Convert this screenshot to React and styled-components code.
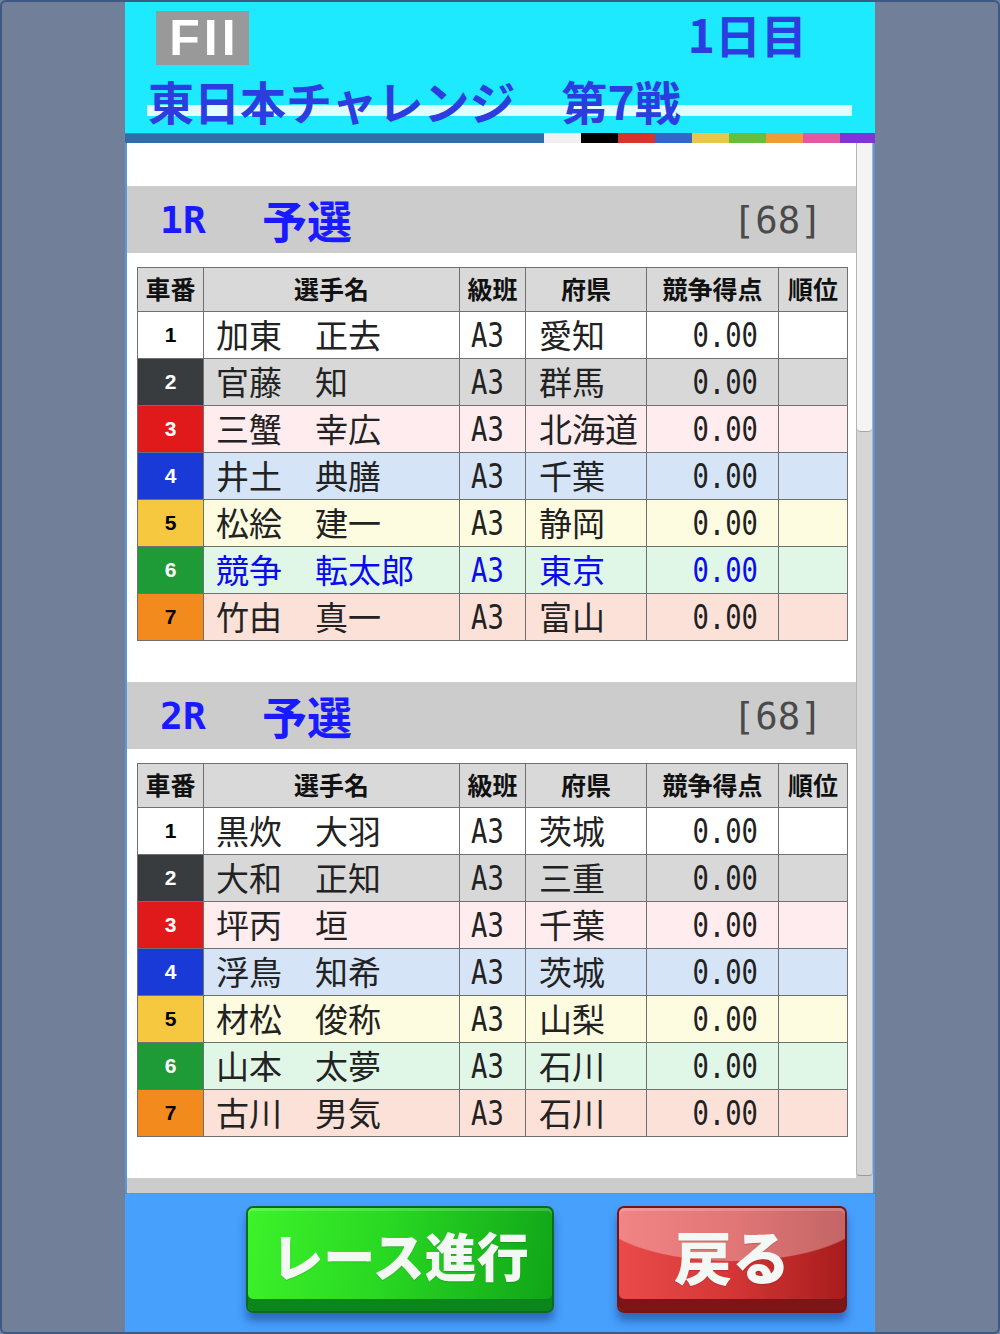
import React from "react";
import styled, { createGlobalStyle } from "styled-components";

const JP = '"Noto Sans CJK JP", "Noto Sans", sans-serif';
const MONO = '"DejaVu Sans Mono", "Liberation Mono", monospace';

const Global = createGlobalStyle`
  html, body { margin: 0; padding: 0; background: #717f99; }
  #root { width: 1000px; height: 1334px; }
  * { box-sizing: border-box; }
`;

const Page = styled.div`
  width: 1000px;
  height: 1334px;
  border: 2px solid #3d5a85;
  border-radius: 6px;
  background: #717f99;
  display: flex;
  justify-content: center;
  overflow: hidden;
`;

const Column = styled.div`
  width: 750px;
  height: 1330px;
  display: flex;
  flex-direction: column;
`;

const Header = styled.header`
  flex: 0 0 131px;
  background: #1de9ff;
  padding-top: 9px;
  display: flex;
  flex-direction: column;
`;

const TopRow = styled.div`
  display: flex;
  justify-content: space-between;
  align-items: flex-start;
  padding: 0 68px 0 31px;
`;

const Badge = styled.div`
  width: 93px;
  height: 54px;
  background: #999999;
  color: #ffffff;
  font-family: "Liberation Sans", Arial, sans-serif;
  font-weight: 700;
  font-size: 50px;
  letter-spacing: 4px;
  display: flex;
  align-items: center;
  justify-content: center;
  line-height: 1;
  padding-left: 4px;
`;

const DayLabel = styled.div`
  font-family: ${JP};
  font-weight: 700;
  font-size: 46px;
  line-height: 46px;
  color: #2b3ddf;
  margin-top: -1px;
`;

const TitleRow = styled.div`
  margin: 10px 0 0 22px;
  width: 705px;
  height: 50px;
  padding-left: 1px;
  font-family: ${JP};
  font-weight: 700;
  font-size: 46px;
  line-height: 50px;
  color: #2b3ddf;
  white-space: pre;
  background: linear-gradient(
    to bottom,
    transparent 30px,
    #e0fcff 30px,
    #e0fcff 41px,
    transparent 41px
  );
`;

const ColorBar = styled.div`
  flex: 0 0 10px;
  display: flex;
`;

const BarBase = styled.div`
  flex: 1;
  background: #2f6ea8;
  border-top: 1px solid #4a84bb;
`;

const Swatch = styled.div`
  flex: 0 0 ${(p) => p.$w || 37}px;
  background: ${(p) => p.$c};
`;

const Panel = styled.section`
  flex: 0 0 1051px;
  display: flex;
  background: #ffffff;
  border-left: 2px solid #5b97d8;
  border-right: 2px solid #5b97d8;
  border-bottom: 1px solid #8a8a8a;
  border-radius: 0 0 4px 4px;
  overflow: hidden;
`;

const List = styled.div`
  flex: 1;
  overflow: hidden;
  padding-top: 43px;
  background: #ffffff;
`;

const RaceBlock = styled.div`
  margin-bottom: 41px;
`;

const RaceBar = styled.div`
  height: 67px;
  background: #cccccc;
  display: flex;
  align-items: center;
  padding: 0 33px 0 33px;
`;

const RaceNo = styled.span`
  font-family: ${MONO};
  font-weight: 700;
  font-size: 38px;
  color: #1a1aff;
  width: 102px;
`;

const RaceKind = styled.span`
  font-family: ${JP};
  font-weight: 700;
  font-size: 45px;
  color: #1a1aff;
  flex: 1;
`;

const Entries = styled.span`
  font-family: ${MONO};
  font-size: 38px;
  color: #4a4a4a;
  display: inline-block;
  transform: scaleX(0.98);
  transform-origin: right center;
`;

const Table = styled.table`
  margin: 14px 9px 0 10px;
  width: 710px;
  border-collapse: collapse;
  table-layout: fixed;
  border: 1px solid #6a6a6a;
`;

const HeadCell = styled.th`
  height: 44px;
  padding: 0 0 2px;
  background: #d9d9d9;
  border: 1px solid #707070;
  font-family: ${JP};
  font-weight: 700;
  font-size: 25px;
  color: #111111;
  text-align: center;
  vertical-align: middle;
  line-height: 1;
`;

const Row = styled.tr`
  background: ${(p) => p.$bg};
  color: ${(p) => (p.$blue ? "#0b0bf0" : "#222222")};
`;

const NumCell = styled.td`
  height: 47px;
  padding: 0;
  border: 1px solid #707070;
  background: ${(p) => p.$bg};
  color: ${(p) => p.$fg};
  font-family: "Liberation Sans", Arial, sans-serif;
  font-weight: 700;
  font-size: 21px;
  text-align: center;
  vertical-align: middle;
`;

const NameCell = styled.td`
  padding: 0 0 2px ${(p) => p.$pl || 12}px;
  border: 1px solid #707070;
  font-family: ${JP};
  font-size: 33px;
  line-height: 1;
  white-space: pre;
  vertical-align: middle;
  text-align: left;
`;

const MonoCell = styled.td`
  padding: 0 ${(p) => p.$pr || 0}px 0 ${(p) => p.$pl || 0}px;
  border: 1px solid #707070;
  text-align: ${(p) => p.$align || "left"};
  vertical-align: middle;
  line-height: 1;
`;

const MonoText = styled.span`
  display: inline-block;
  font-family: ${MONO};
  font-size: 34px;
  transform: scaleX(0.8);
  transform-origin: ${(p) => p.$origin || "left"} center;
`;

const ScrollCol = styled.div`
  flex: 0 0 17px;
  display: flex;
  flex-direction: column;
  background: #cccccc;
`;

const Track = styled.div`
  flex: 1;
  background: #d6d6d6;
  border-left: 1px solid #b5b5b5;
  border-right: 1px solid #b5b5b5;
  border-bottom: 1px solid #9a9a9a;
  border-radius: 0 0 4px 4px;
  display: flex;
  flex-direction: column;
`;

const Thumb = styled.div`
  height: 289px;
  background: #f4f4f4;
  border-bottom: 1px solid #a8a8a8;
  border-radius: 0 0 4px 4px;
`;

const Filler = styled.div`
  flex: 0 0 17px;
  background: #cccccc;
`;

const Footer = styled.footer`
  flex: 1;
  background: #47a0fc;
  display: flex;
  justify-content: flex-end;
  align-items: flex-start;
  gap: 63px;
  padding: 12px 28px 0 0;
`;

const Btn = styled.button`
  width: ${(p) => p.$w}px;
  height: 107px;
  border-radius: 7px;
  border: 2px solid ${(p) => p.$edge};
  background: ${(p) => p.$bg};
  box-shadow: inset 0 -12px 0 ${(p) => p.$strip},
    inset 0 3px 0 rgba(255, 255, 255, 0.18),
    0 8px 8px rgba(10, 40, 110, 0.45);
  color: #f4f8f4;
  font-family: ${JP};
  font-weight: 900;
  font-size: ${(p) => p.$fs}px;
  line-height: 1;
  padding: 0 0 10px;
  display: flex;
  align-items: center;
  justify-content: center;
  cursor: pointer;
  text-shadow: 0 1px 1px rgba(0, 0, 0, 0.15);
`;

const colors = [
  { num: "#ffffff", fg: "#000000", row: "#ffffff" },
  { num: "#383c3f", fg: "#ffffff", row: "#d8d8d8" },
  { num: "#e01a1a", fg: "#ffffff", row: "#ffecee" },
  { num: "#1a3ad8", fg: "#ffffff", row: "#d5e5f7" },
  { num: "#f5c840", fg: "#000000", row: "#fefce0" },
  { num: "#1e9a36", fg: "#ffffff", row: "#e0f6e6" },
  { num: "#f38a1e", fg: "#000000", row: "#fbe1d8" },
];

const races = [
  {
    no: "1R",
    kind: "予選",
    entries: "[68]",
    riders: [
      ["加東　正去", "愛知"],
      ["官藤　知", "群馬"],
      ["三蟹　幸広", "北海道"],
      ["井土　典膳", "千葉"],
      ["松絵　建一", "静岡"],
      ["競争　転太郎", "東京", true],
      ["竹由　真一", "富山"],
    ],
  },
  {
    no: "2R",
    kind: "予選",
    entries: "[68]",
    riders: [
      ["黒炊　大羽", "茨城"],
      ["大和　正知", "三重"],
      ["坪丙　垣", "千葉"],
      ["浮鳥　知希", "茨城"],
      ["材松　俊称", "山梨"],
      ["山本　太夢", "石川"],
      ["古川　男気", "石川"],
    ],
  },
  {
    no: "3R",
    kind: "予選",
    entries: "[68]",
    riders: [],
  },
];

const swatches = [
  "#f0f0f0",
  "#000000",
  "#d8342a",
  "#2f68c8",
  "#e8c64a",
  "#66bf3a",
  "#f09a3a",
  "#e05aa0",
];

function Race({ race }) {
  return (
    <RaceBlock>
      <RaceBar>
        <RaceNo>{race.no}</RaceNo>
        <RaceKind>{race.kind}</RaceKind>
        <Entries>{race.entries}</Entries>
      </RaceBar>
      {race.riders.length > 0 && (
        <Table>
          <colgroup>
            <col style={{ width: 66 }} />
            <col style={{ width: 256 }} />
            <col style={{ width: 66 }} />
            <col style={{ width: 121 }} />
            <col style={{ width: 132 }} />
            <col style={{ width: 69 }} />
          </colgroup>
          <thead>
            <tr>
              <HeadCell>車番</HeadCell>
              <HeadCell>選手名</HeadCell>
              <HeadCell>級班</HeadCell>
              <HeadCell>府県</HeadCell>
              <HeadCell>競争得点</HeadCell>
              <HeadCell>順位</HeadCell>
            </tr>
          </thead>
          <tbody>
            {race.riders.map(([name, pref, blue], i) => (
              <Row key={i} $bg={colors[i].row} $blue={blue}>
                <NumCell $bg={colors[i].num} $fg={colors[i].fg}>
                  {i + 1}
                </NumCell>
                <NameCell>{name}</NameCell>
                <MonoCell $pl={11}>
                  <MonoText>A3</MonoText>
                </MonoCell>
                <NameCell $pl={13}>{pref}</NameCell>
                <MonoCell $align="right" $pr={20}>
                  <MonoText $origin="right">0.00</MonoText>
                </MonoCell>
                <MonoCell />
              </Row>
            ))}
          </tbody>
        </Table>
      )}
    </RaceBlock>
  );
}

export default function App() {
  return (
    <>
      <Global />
      <Page>
        <Column>
          <Header>
            <TopRow>
              <Badge>FII</Badge>
              <DayLabel>1日目</DayLabel>
            </TopRow>
            <TitleRow>東日本チャレンジ　第7戦</TitleRow>
          </Header>
          <ColorBar>
            <BarBase />
            {swatches.map((c) => (
              <Swatch key={c} $c={c} />
            ))}
            <Swatch $c="#8033d6" $w={35} />
          </ColorBar>
          <Panel>
            <List>
              {races.map((r) => (
                <Race key={r.no} race={r} />
              ))}
            </List>
            <ScrollCol>
              <Track>
                <Thumb />
              </Track>
              <Filler />
            </ScrollCol>
          </Panel>
          <Footer>
            <Btn
              $w={308}
              $fs={52}
              $edge="#0b6a1e"
              $strip="#0b861c"
              $bg="linear-gradient(100deg, #3ef22a 0%, #28d822 45%, #10a418 100%)"
            >
              レース進行
            </Btn>
            <Btn
              $w={230}
              $fs={58}
              $edge="#7a1414"
              $strip="#7c1616"
              $bg="radial-gradient(ellipse 62% 52% at 50% 0%, rgba(255,255,255,0.32) 98%, rgba(255,255,255,0) 100%), linear-gradient(90deg, #ea4a4a 0%, #d43636 50%, #a81c1c 100%)"
            >
              戻る
            </Btn>
          </Footer>
        </Column>
      </Page>
    </>
  );
}
